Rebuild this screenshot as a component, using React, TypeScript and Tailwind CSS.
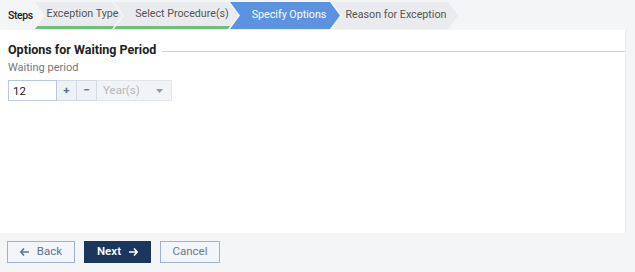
import { useState } from 'react';

const steps = [
  { label: 'Exception Type', state: 'done', w: 'w-[87px]', pad: 'pl-[10px] pr-[2px]' },
  { label: 'Select Procedure(s)', state: 'done', w: 'w-[124px]', pad: '-ml-[8px] pl-[14px] pr-[2px]' },
  { label: 'Specify Options', state: 'active', w: 'w-[110px]', pad: '-ml-[8px] pl-[12px] pr-[4px]' },
  { label: 'Reason for Exception', state: 'todo', w: 'w-[126px]', pad: '-ml-[8px] pl-[8px] pr-[6px]' },
];

function Chevron({ label, state, w, pad }: { label: string; state: string; w: string; pad: string }) {
  const base =
    'h-[27px] shrink-0 flex items-center justify-center text-[10.7px] whitespace-nowrap [clip-path:polygon(0_0,calc(100%-10px)_0,100%_50%,calc(100%-10px)_100%,0_100%,10px_50%)]';
  const tone =
    state === 'active'
      ? 'bg-[#5b93e2] text-white'
      : state === 'done'
        ? 'bg-[#e9ebef] text-[#555] border-b-[3px] border-[#6cc07a]'
        : 'bg-[#e9ebef] text-[#555]';
  return <div className={`${base} ${tone} ${w} ${pad}`}>{label}</div>;
}

export default function App() {
  const [value, setValue] = useState(12);

  return (
    <div className="w-[635px] h-[272px] flex flex-col bg-[#f4f5f7] font-['Roboto',sans-serif] text-[#222]">
      {/* Pasos */}
      <div className="h-[30px] flex items-start pt-[2px] pl-[8px]">
        <span className="w-[27px] shrink-0 h-[27px] flex items-center text-[10.5px] font-medium text-[#222] tracking-[-0.4px]">
          Steps
        </span>
        {steps.map((s) => (
          <Chevron key={s.label} label={s.label} state={s.state} w={s.w} pad={s.pad} />
        ))}
      </div>

      {/* Contenido */}
      <div className="flex flex-1">
        <div className="w-[625px] bg-white pl-[8px] pt-[11px] h-[203px]">
          <div className="flex items-center gap-[6px]">
            <h2 className="text-[12.5px] font-bold text-[#222] whitespace-nowrap">Options for Waiting Period</h2>
            <div className="flex-1 h-px bg-[#cfd3d8] mt-[2px]" />
          </div>
          <p className="text-[11px] text-[#777]">Waiting period</p>
          <div className="flex mt-[4px] h-[21px] text-[11.5px]">
            <input
              value={value}
              onChange={(e) => setValue(Number(e.target.value) || 0)}
              className="w-[49px] h-full border border-[#b8c8e2] px-[4px] text-[#222] outline-none"
            />
            <button
              onClick={() => setValue(value + 1)}
              className="w-[20px] h-full border-y border-r border-[#d4dae3] bg-[#eef1f5] text-[#5a6e8c] font-bold flex items-center justify-center"
            >
              +
            </button>
            <button
              onClick={() => setValue(Math.max(0, value - 1))}
              className="w-[20px] h-full border-y border-r border-[#d4dae3] bg-[#eef1f5] text-[#5a6e8c] font-bold flex items-center justify-center"
            >
              −
            </button>
            <div className="w-[75px] h-full bg-[#f1f3f6] border-y border-r border-[#e2e6eb] flex items-center justify-between pl-[6px] pr-[8px] text-[#b3b8bf]">
              <span>Year(s)</span>
              <svg width="7" height="4" viewBox="0 0 7 4">
                <path d="M0 0h7L3.5 4z" fill="#8a9ab0" />
              </svg>
            </div>
          </div>
        </div>
        <div className="flex-1 border-l border-[#eceef1]" />
      </div>

      {/* Acciones */}
      <div className="h-[39px] flex items-center pl-[7px] gap-[9px] pb-[1px]">
        <button className="w-[68px] h-[22px] border border-[#9fb1c8] bg-[#f2f5f9] text-[#5d7290] text-[11.5px] flex items-center justify-center gap-[8px]">
          <svg width="9" height="8" viewBox="0 0 9 8">
            <path d="M4 0.5L0.8 4L4 7.5M1 4h8" stroke="#5d7290" strokeWidth="1.6" fill="none" />
          </svg>
          Back
        </button>
        <button className="w-[67px] h-[22px] bg-[#1b365d] text-white text-[11.5px] font-semibold flex items-center justify-center gap-[8px]">
          Next
          <svg width="9" height="8" viewBox="0 0 9 8">
            <path d="M5 0.5L8.2 4L5 7.5M0 4h8" stroke="#fff" strokeWidth="1.6" fill="none" />
          </svg>
        </button>
        <button className="w-[60px] h-[22px] border border-[#9fb1c8] bg-[#f2f5f9] text-[#6b7a8c] text-[11.5px] flex items-center justify-center">
          Cancel
        </button>
      </div>
    </div>
  );
}
